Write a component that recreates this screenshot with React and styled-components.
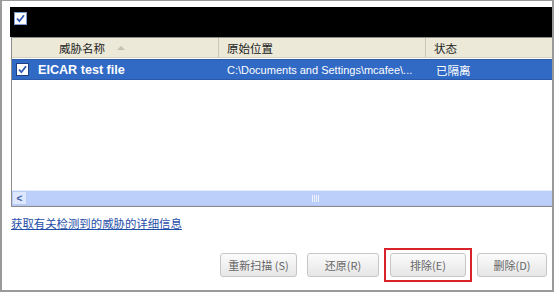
import React from "react";
import styled, { createGlobalStyle } from "styled-components";

const Global = createGlobalStyle`
  html, body { margin: 0; padding: 0; background: #fff; }
  body { font-family: "Liberation Sans", "Noto Sans CJK SC", sans-serif; }
`;

const Frame = styled.div`
  width: 554px;
  height: 292px;
  box-sizing: border-box;
  border: 1px solid #9a9a9a;
  border-left-width: 2px;
  border-bottom-width: 2px;
  border-right-width: 2px;
  padding: 6px 0 0 8px;
  display: flex;
  flex-direction: column;
  background: #fff;
`;

const TopBar = styled.div`
  height: 30px;
  background: #000;
  display: flex;
  align-items: flex-start;
  padding: 5px 0 0 4px;
  box-sizing: border-box;
`;

const List = styled.div`
  height: 170px;
  border: 1px solid #8c8c8c;
  border-right: none;
  margin-left: 1px;
  display: flex;
  flex-direction: column;
  box-sizing: border-box;
`;

const HeaderRow = styled.div`
  height: 20px;
  background: #ece9d8;
  border-bottom: 1px solid #d6d2c2;
  display: grid;
  grid-template-columns: 207px 207px 1fr;
  font-family: "Noto Sans CJK SC", sans-serif;
  font-size: 11.5px;
  color: #222;
  box-sizing: border-box;
`;

const HeaderCell = styled.div`
  display: flex;
  align-items: center;
  padding-left: ${p => p.pad || 8}px;
  border-right: ${p => (p.last ? "none" : "1px solid #cbc7b8")};
  gap: 12px;
`;

const SortArrow = styled.span`
  width: 0;
  height: 0;
  border-left: 4px solid transparent;
  border-right: 4px solid transparent;
  border-bottom: 4px solid #c5c2b2;
`;

const Row = styled.div`
  height: 21px;
  margin-top: 1px;
  background: #316ac5;
  border-top: 1px solid #2a5aa8;
  border-bottom: 1px solid #2a5aa8;
  display: grid;
  grid-template-columns: 207px 207px 1fr;
  color: #fff;
  font-size: 11px;
  box-sizing: border-box;
`;

const Cell = styled.div`
  display: flex;
  align-items: center;
  gap: 9px;
  padding-left: ${p => p.pad || 8}px;
  font-weight: ${p => (p.bold ? 700 : 400)};
  font-size: ${p => (p.bold ? "12.6px" : p.cjk ? "11.5px" : "inherit")};
  font-family: ${p => (p.cjk ? '"Noto Sans CJK SC", sans-serif' : "inherit")};
  white-space: nowrap;
  overflow: hidden;
`;

const Body = styled.div`
  flex: 1;
  background: #fff;
`;

const ScrollBar = styled.div`
  height: 14px;
  display: flex;
  background: #c2d4fc;
  border-top: 1px solid #e4ecfe;
  border-bottom: 1px solid #b4c6ee;
`;

const ArrowBtn = styled.div`
  width: 15px;
  display: flex;
  align-items: center;
  justify-content: center;
  background: #dde7fd;
  border: 1px solid #b8cbf3;
  box-sizing: border-box;
  color: #3b5fa8;
  font-size: 10px;
  font-weight: bold;
`;

const Thumb = styled.div`
  flex: 1;
  display: flex;
  align-items: center;
  padding-left: 285px;
  background: #bccffb;
`;

const Grip = styled.div`
  width: 7px;
  height: 7px;
  background: repeating-linear-gradient(90deg, #eef3ff 0 1px, transparent 1px 2px);
`;

const Link = styled.a`
  margin-top: 8px;
  margin-left: 1px;
  font-family: "Noto Sans CJK SC", sans-serif;
  font-size: 11.4px;
  color: #1f4ea8;
  text-decoration: underline;
  align-self: flex-start;
`;

const Buttons = styled.div`
  margin-top: auto;
  margin-bottom: 8px;
  display: flex;
  justify-content: flex-end;
  align-items: center;
  gap: 10px;
  padding-right: 5px;
`;

const Btn = styled.div`
  width: ${p => p.w}px;
  height: 24px;
  box-sizing: border-box;
  border: 1px solid #c6c6c6;
  border-radius: 3px;
  background: linear-gradient(#fbfbfb, #e6e6e6);
  display: flex;
  align-items: center;
  justify-content: center;
  font-family: "Noto Sans CJK SC", sans-serif;
  font-size: 11px;
  color: #666;
`;

const Highlight = styled.div`
  padding: 3px 4px;
  border: 2px solid #d8232a;
  margin: 0 -5px;
`;

const Check = ({ onBlue }) => (
  <svg width="13" height="13" viewBox="0 0 13 13">
    <rect x="0.5" y="0.5" width="12" height="12" fill="#fff" stroke={onBlue ? "#1c3f86" : "#7b9ad0"} />
    <path d="M3 6.5 L5.4 9.2 L10 3.3" fill="none" stroke="#2d58b8" strokeWidth="1.8" />
  </svg>
);

export default function App() {
  return (
    <>
      <Global />
      <Frame>
        <TopBar>
          <Check />
        </TopBar>
        <List>
          <HeaderRow>
            <HeaderCell pad={47}>
              威胁名称 <SortArrow />
            </HeaderCell>
            <HeaderCell>原始位置</HeaderCell>
            <HeaderCell last>状态</HeaderCell>
          </HeaderRow>
          <Row>
            <Cell pad={4} bold>
              <Check onBlue />
              EICAR test file
            </Cell>
            <Cell>C:\Documents and Settings\mcafee\...</Cell>
            <Cell cjk pad={10}>已隔离</Cell>
          </Row>
          <Body />
          <ScrollBar>
            <ArrowBtn>&lt;</ArrowBtn>
            <Thumb>
              <Grip />
            </Thumb>
          </ScrollBar>
        </List>
        <Link>获取有关检测到的威胁的详细信息</Link>
        <Buttons>
          <Btn w={77}>重新扫描 (S)</Btn>
          <Btn w={72}>还原(R)</Btn>
          <Highlight>
            <Btn w={76}>排除(E)</Btn>
          </Highlight>
          <Btn w={70}>删除(D)</Btn>
        </Buttons>
      </Frame>
    </>
  );
}
